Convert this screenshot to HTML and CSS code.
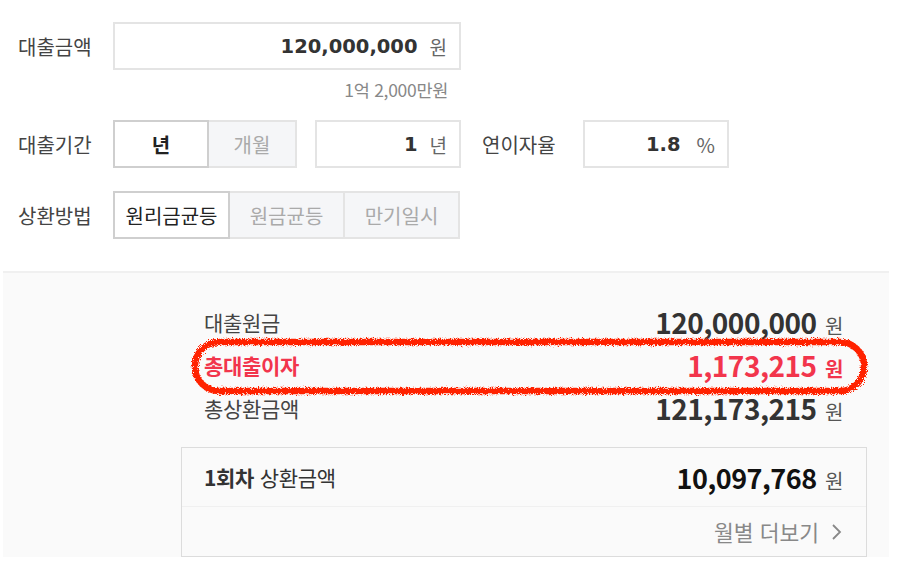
FILE: index.html
```html
<!DOCTYPE html>
<html lang="ko">
<head>
    <meta charset="UTF-8">
    <title>대출 계산기</title>
    <link rel="stylesheet" href="styles.css">
</head>
<body>
    <div class="form">
        <div class="row row-top">
            <span class="label">대출금액</span>
            <div class="field wide"><b class="num">120,000,000</b><span class="unit">원</span></div>
        </div>
        <div class="hint">1억 2,000만원</div>

        <div class="row">
            <span class="label">대출기간</span>
            <div class="toggle">
                <span class="opt on t-year">년</span>
                <span class="opt t-month">개월</span>
            </div>
            <div class="field short"><b class="num">1</b><span class="unit">년</span></div>
            <span class="label label-rate">연이자율</span>
            <div class="field short"><b class="num">1.8</b><span class="unit pct">%</span></div>
        </div>

        <div class="row">
            <span class="label">상환방법</span>
            <div class="toggle">
                <span class="opt on m">원리금균등</span>
                <span class="opt m">원금균등</span>
                <span class="opt m">만기일시</span>
            </div>
        </div>
    </div>

    <div class="result">
        <div class="summary">
            <div class="line"><span>대출원금</span><span class="val"><b>120,000,000</b> 원</span></div>
            <div class="line red"><span>총대출이자</span><span class="val"><b>1,173,215</b> 원</span></div>
            <div class="line"><span>총상환금액</span><span class="val"><b>121,173,215</b> 원</span></div>

            <svg class="mark" width="679" height="59" viewBox="0 0 679 59">
                <defs>
                    <filter id="rough" x="-5%" y="-20%" width="110%" height="140%">
                        <feTurbulence type="fractalNoise" baseFrequency="1.4" numOctaves="3" seed="5"/>
                        <feDisplacementMap in="SourceGraphic" scale="6"/>
                    </filter>
                </defs>
                <rect x="5" y="5" width="669" height="49" rx="24" fill="none" stroke="#ff2200" stroke-width="6.5" filter="url(#rough)"/>
            </svg>
        </div>

        <div class="card">
            <div class="card-top">
                <span><b>1회차</b> 상환금액</span>
                <span class="val"><b>10,097,768</b> 원</span>
            </div>
            <div class="card-more">
                월별 더보기
                <svg width="11" height="18" viewBox="0 0 11 18"><polyline points="2,2 9,9 2,16" fill="none" stroke="#888" stroke-width="1.8"/></svg>
            </div>
        </div>
    </div>
</body>
</html>
```

FILE: styles.css
```css
body {
    margin: 0;
    font-family: "Noto Sans CJK KR", "Noto Sans", sans-serif;
    color: #444;
    background: #fff;
}
.form {
    padding: 22px 0 0 18px;
}
.row {
    display: flex;
    align-items: center;
    height: 48px;
    margin-bottom: 23px;
}
.row.row-top,
.row:last-child {
    margin-bottom: 0;
}
.label {
    width: 95px;
    font-size: 20px;
    color: #444;
}
.label-rate {
    width: 101px;
    margin-left: 21px;
}
.field {
    display: flex;
    align-items: center;
    justify-content: flex-end;
    box-sizing: border-box;
    height: 48px;
    padding-right: 12px;
    border: 2px solid #e4e4e4;
    background: #fff;
}
.field.wide {
    width: 348px;
}
.field.short {
    width: 146px;
}
.num {
    font-family: "DejaVu Sans", sans-serif;
    font-size: 19.5px;
    font-weight: bold;
    color: #333;
}
.unit {
    margin-left: 12px;
    font-size: 19px;
    color: #666;
}
.unit.pct {
    margin-left: 16px;
    font-size: 20px;
}
.hint {
    width: 430px;
    height: 50px;
    line-height: 40px;
    text-align: right;
    font-size: 17.5px;
    letter-spacing: -0.3px;
    color: #888;
}
.toggle {
    display: flex;
    margin-right: 18px;
}
.opt {
    display: flex;
    align-items: center;
    justify-content: center;
    box-sizing: border-box;
    height: 48px;
    font-size: 20px;
    color: #aaa;
    background: #f5f6f8;
    border: 2px solid #e4e4e4;
    margin-left: -2px;
}
.opt:first-child {
    margin-left: 0;
}
.opt.on {
    color: #222;
    background: #fff;
    border-color: #cfcfcf;
    position: relative;
}
.t-year {
    width: 96px;
    font-weight: bold;
}
.t-month {
    width: 90px;
}
.m {
    width: 117px;
}
.result {
    margin: 32px 30px 0 3px;
    padding: 27px 22px 0 178px;
    background: #fafafa;
    border-top: 2px solid #f0f0f0;
}
.summary {
    position: relative;
    padding: 0 24px 0 23px;
}
.line {
    display: flex;
    justify-content: space-between;
    align-items: center;
    height: 43px;
    font-size: 21px;
    color: #444;
    letter-spacing: -0.3px;
}
.val {
    font-size: 20px;
    color: #555;
}
.val b {
    font-size: 28px;
    color: #333;
    letter-spacing: -0.5px;
    margin-right: 3px;
}
.line.red,
.line.red .val,
.line.red .val b {
    color: #f2354c;
    font-weight: bold;
}
.mark {
    position: absolute;
    left: 9px;
    top: 37px;
}
.card {
    margin-top: 18px;
    border: 1px solid #dcdcdc;
    background: #fafafa;
}
.card-top {
    display: flex;
    justify-content: space-between;
    align-items: center;
    height: 58px;
    padding: 0 23px 0 22px;
    font-size: 21px;
    color: #333;
    letter-spacing: -0.3px;
    border-bottom: 1px solid #f0f0f0;
}
.card-top .val b {
    font-size: 27px;
    color: #111;
}
.card-more {
    display: flex;
    justify-content: flex-end;
    align-items: center;
    gap: 12px;
    height: 49px;
    padding-right: 24px;
    font-size: 21.5px;
    color: #888;
}
```
